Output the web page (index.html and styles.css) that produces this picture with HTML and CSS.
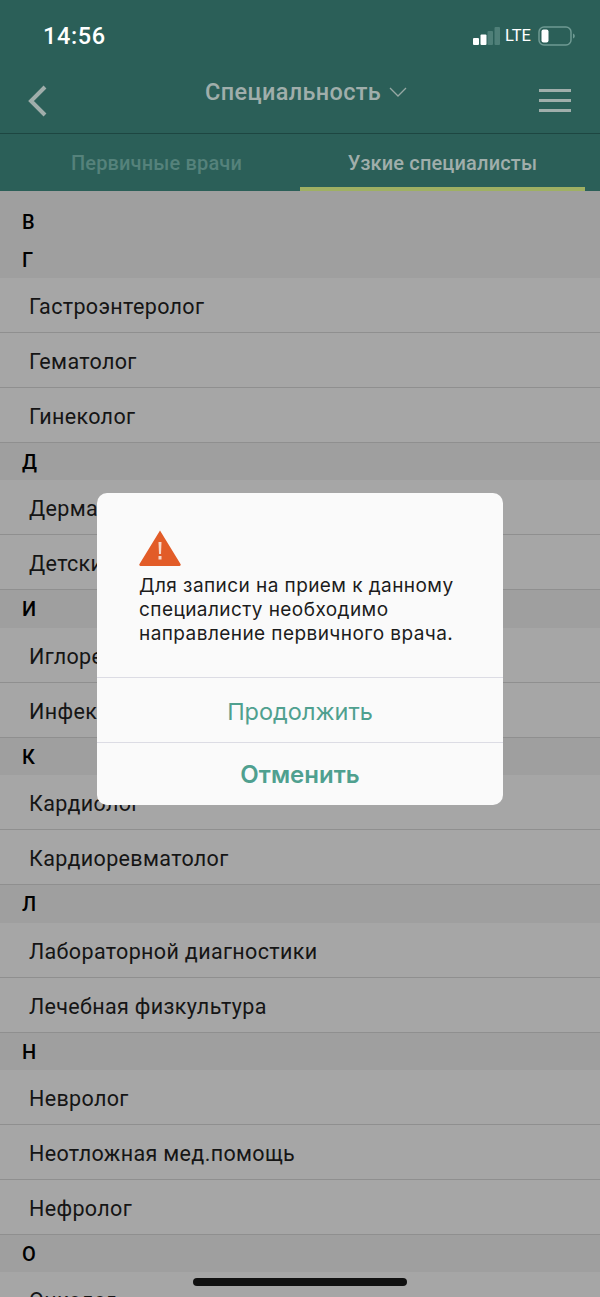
FILE: index.html
```html
<!DOCTYPE html>
<html lang="ru">
<head>
<meta charset="utf-8">
<title>Специальность</title>
<link rel="stylesheet" href="styles.css">
</head>
<body>
<div class="screen">
  <header class="top">
    <div class="status">
      <span class="time">14:56</span>
      <div class="status-right">
        <svg class="signal" width="27" height="18" viewBox="0 0 27 18"><rect x="0" y="11" width="6" height="7" rx="1" fill="#fff"/><rect x="7.5" y="7.500" width="6" height="10.500" rx="1" fill="#fff"/><rect x="14.500" y="4" width="5.500" height="14" rx="1" fill="#4f7f78"/><rect x="21.500" y="0" width="5.500" height="18" rx="1" fill="#4f7f78"/></svg>
        <span class="lte">LTE</span>
        <svg class="battery" width="37" height="20" viewBox="0 0 37 20"><rect x="1" y="1" width="32" height="18" rx="5" fill="none" stroke="#6f9a93" stroke-width="1.500"/><rect x="3.500" y="3.500" width="7" height="13" rx="2" fill="#fff"/><path d="M35 7.500c1.300.5 1.800 1.300 1.800 2.500s-.5 2-1.800 2.500z" fill="#6f9a93"/></svg>
      </div>
    </div>
    <div class="nav">
      <svg class="back" width="20" height="32" viewBox="0 0 20 32"><path d="M17 2 3 16l14 14" fill="none" stroke="#a0aeab" stroke-width="4"/></svg>
      <div class="title">
        <span>Специальность</span>
        <svg width="18" height="10" viewBox="0 0 18 10"><path d="M1 1l8 8 8-8" fill="none" stroke="#97a8a4" stroke-width="1.300"/></svg>
      </div>
      <div class="burger"><i></i><i></i><i></i></div>
    </div>
    <nav class="tabs">
      <div class="tab">Первичные врачи</div>
      <div class="tab tab-active">Узкие специалисты</div>
    </nav>
  </header>

  <main class="list">
    <div class="band band-first">В</div>
    <div class="band">Г</div>
    <div class="row">Гастроэнтеролог</div>
    <div class="row">Гематолог</div>
    <div class="row">Гинеколог</div>
    <div class="band">Д</div>
    <div class="row">Дерматолог</div>
    <div class="row">Детский врач</div>
    <div class="band">И</div>
    <div class="row">Иглорефлексотерапевт</div>
    <div class="row">Инфекционист</div>
    <div class="band">К</div>
    <div class="row">Кардиолог</div>
    <div class="row">Кардиоревматолог</div>
    <div class="band">Л</div>
    <div class="row">Лабораторной диагностики</div>
    <div class="row">Лечебная физкультура</div>
    <div class="band">Н</div>
    <div class="row">Невролог</div>
    <div class="row">Неотложная мед.помощь</div>
    <div class="row">Нефролог</div>
    <div class="band">О</div>
    <div class="row">Онколог</div>
  </main>

  <div class="home-bar"></div>

  <section class="dialog">
    <div class="dialog-body">
      <svg class="warn" width="42" height="36" viewBox="0 0 42 36"><path d="M21 0.500 41.500 34a1.300 1.300 0 0 1-1 2H1.500a1.300 1.300 0 0 1-1-2z" fill="#e25c28"/><path d="M19.500 12h3l-.5 12h-2z" fill="#f6d9cb"/><rect x="19.500" y="26" width="3" height="3.500" fill="#f6d9cb"/></svg>
      <p class="message">Для записи на прием к данному специалисту необходимо направление первичного врача.</p>
    </div>
    <div class="action">Продолжить</div>
    <div class="action action-strong">Отменить</div>
  </section>
</div>
</body>
</html>
```
FILE: styles.css
```css
* { box-sizing: border-box; }
html, body { margin: 0; height: 100%; }
body { overflow: hidden; background: #a6a6a6; font-family: Roboto, sans-serif; }
.screen { position: relative; width: 600px; height: 1297px; overflow: hidden; }

.top { background: #2b5f58; height: 191px; }
.status { height: 66px; display: flex; justify-content: space-between; align-items: flex-start; padding: 22px 25px 0 43px; }
.time { color: #fff; font-size: 23.500px; font-weight: 500; line-height: 28px; letter-spacing: .6px; }
.status-right { display: flex; align-items: center; padding-top: 2px; height: 26px; }
.signal { margin-right: 5px; }
.lte { color: #fff; font-size: 16.500px; line-height: 20px; margin-right: 7px; }
.battery { display: block; }

.nav { height: 68px; border-bottom: 1px solid #1d4641; display: flex; justify-content: space-between; position: relative; padding: 0 29px 0 28px; }
.back { margin-top: 19px; }
.title { position: absolute; left: 205px; top: 11px; display: flex; align-items: center; gap: 8px; color: #a0aeab; font-size: 23.500px; font-weight: 500; line-height: 30px; letter-spacing: .35px; }
.burger { display: flex; flex-direction: column; gap: 7px; margin: 23px 0 0; width: 32px; }
.burger i { display: block; height: 3px; background: #a0aeab; }

.tabs { height: 57px; display: flex; padding-right: 15px; }
.tab { text-align: center; color: #55827b; font-size: 20px; font-weight: 500; line-height: 58px; letter-spacing: .15px; }
.tab:first-child { flex: 0 0 300px; padding-left: 13px; }
.tab-active { flex: 0 0 285px; color: #a0aeab; border-bottom: 4px solid #9fb063; }

.list { background: #a6a6a6; }
.band { height: 37.400px; padding-left: 22px; background: #9f9f9f; color: #000; font-size: 20px; font-weight: 500; line-height: 39px; }
.band-first { height: 49.600px; line-height: 62px; }
.row { height: 55px; padding-left: 29px; color: #151515; font-size: 21.500px; line-height: 58px; border-bottom: 1px solid #8f8f8f; letter-spacing: .35px; }

.home-bar { position: absolute; left: 193px; top: 1278px; width: 214px; height: 8px; border-radius: 4px; background: #111; }

.dialog { position: absolute; left: 97px; top: 493px; width: 406px; height: 312px; background: #fafafa; border-radius: 10px; overflow: hidden; }
.dialog-body { height: 185px; padding: 37px 10px 0 42px; border-bottom: 1px solid #dcdce4; }
.warn { display: block; }
.message { margin: 8px 0 0; font-family: Inter, sans-serif; font-size: 19px; letter-spacing: .43px; line-height: 24px; color: #1c1c1c; }
.action { height: 65px; border-bottom: 1px solid #dcdce4; text-align: center; font-family: Inter, sans-serif; font-size: 23.500px; line-height: 68px; color: #4fa08f; }
.action-strong { border-bottom: 0; font-size: 24px; font-weight: 600; line-height: 64px; }
```
